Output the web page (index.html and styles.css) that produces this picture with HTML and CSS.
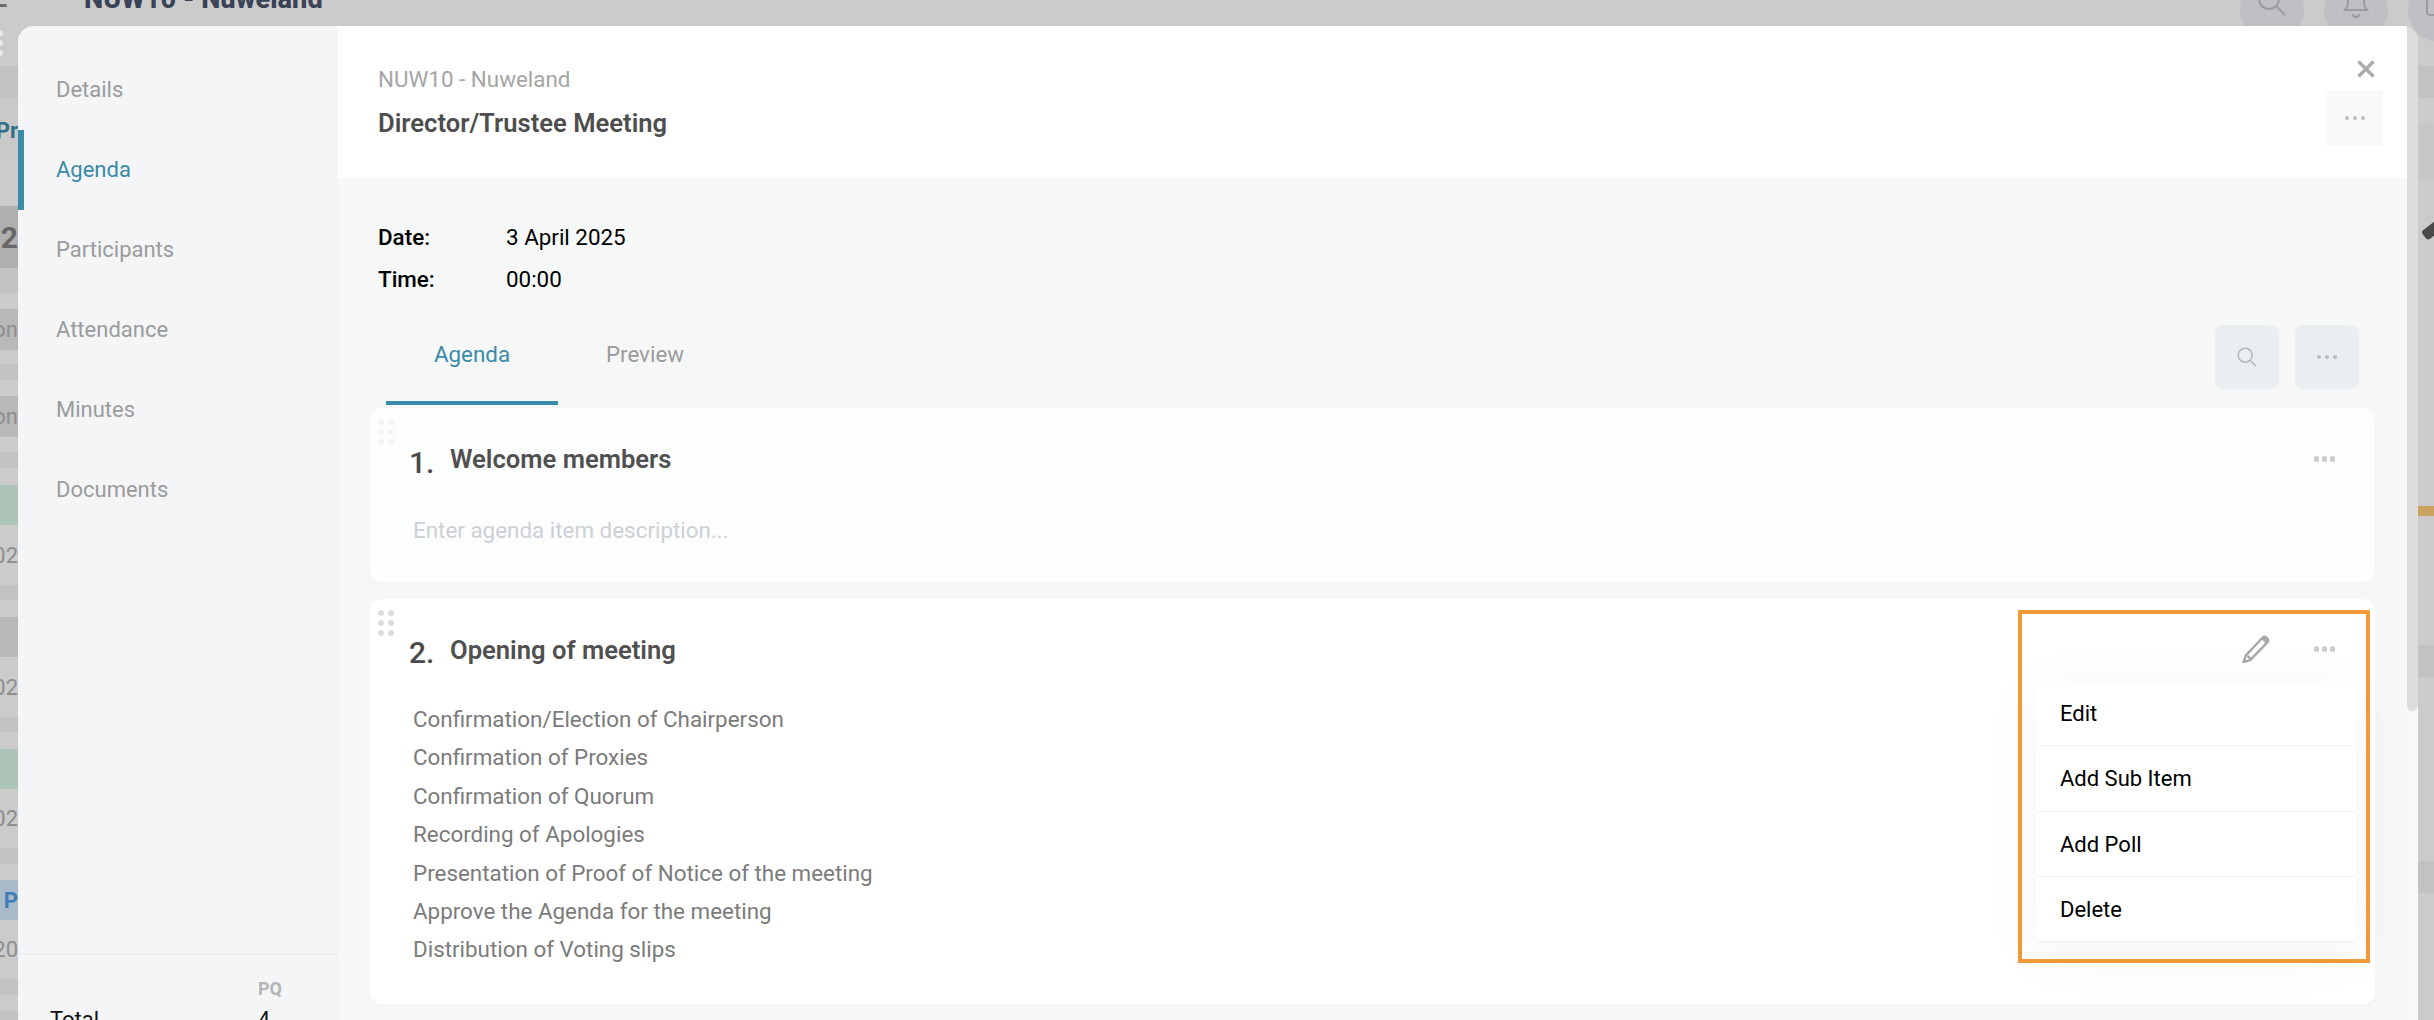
FILE: index.html
```html
<!DOCTYPE html>
<html lang="en">
<head>
<meta charset="utf-8">
<title>Director/Trustee Meeting</title>
<link rel="stylesheet" href="styles.css">
</head>
<body>
<div class="page">
  <div class="topbar">
    <div class="top-logo"></div>
    <div class="top-title">NUW10 - Nuweland</div>
    <div class="top-actions">
      <span class="round"><svg width="32" height="32" viewBox="0 0 32 32" fill="none" stroke="#9a9ba0" stroke-width="2"><circle cx="13" cy="13" r="10"/><path d="M20 20l9 9"/></svg></span>
      <span class="round"><svg width="32" height="32" viewBox="0 0 32 32" fill="none" stroke="#9a9ba0" stroke-width="2"><path d="M5 24c3-3 3-6 3-11a8 8 0 0 1 16 0c0 5 0 8 3 11z"/><path d="M13 28a3 3 0 0 0 6 0"/></svg></span>
      <span class="round"><svg width="32" height="32" viewBox="0 0 32 32" fill="none" stroke="#9a9ba0" stroke-width="2"><rect x="3" y="3" width="24" height="26" rx="3"/></svg></span>
    </div>
  </div>
  <div class="strip strip-left">
    <div class="band h66"></div>
    <div class="band h32 dark1"></div>
    <div class="band h64 txt teal">Pr</div>
    <div class="band h44 light"></div>
    <div class="band h62 dark3 num">2</div>
    <div class="band h25 dark1"></div>
    <div class="band h16 light"></div>
    <div class="band h41 dark2 txt">on</div>
    <div class="band h14 light"></div>
    <div class="band h16 dark1"></div>
    <div class="band h16 light"></div>
    <div class="band h41 dark2 txt">on</div>
    <div class="band h15 light"></div>
    <div class="band h16 dark1"></div>
    <div class="band h17 light"></div>
    <div class="band h40 green"></div>
    <div class="band h60 light txt">02</div>
    <div class="band h15 dark1"></div>
    <div class="band h17 light"></div>
    <div class="band h40 dark2"></div>
    <div class="band h60 light txt">02</div>
    <div class="band h15 dark1"></div>
    <div class="band h17 light"></div>
    <div class="band h40 green"></div>
    <div class="band h59 light txt">02</div>
    <div class="band h16 dark1"></div>
    <div class="band h16 light"></div>
    <div class="band h40 blue txt bluetext">P</div>
    <div class="band h59 light txt">20</div>
    <div class="band h16 dark1"></div>
    <div class="band h16 light"></div>
    <div class="band h16 dark1"></div>
  </div>
  <div class="strip strip-right">
    <div class="band h66"></div>
    <div class="band h32 dark1"></div>
    <div class="band h408 light"></div>
    <div class="band h10 orange"></div>
    <div class="band h129 light"></div>
    <div class="band h32 dark1"></div>
    <div class="band h184 light"></div>
    <div class="band h32 dark1"></div>
    <div class="band h127 light"></div>
    <span class="ghost-circle"></span>
    <span class="pen-bit"></span>
  </div>
  <div class="top-dots"><i></i><i></i><i></i></div>

  <div class="modal">
    <nav class="side">
      <ul class="side-list">
        <li class="side-item">Details</li>
        <li class="side-item active">Agenda</li>
        <li class="side-item">Participants</li>
        <li class="side-item">Attendance</li>
        <li class="side-item">Minutes</li>
        <li class="side-item">Documents</li>
      </ul>
      <div class="totals">
        <div class="pq">PQ</div>
        <div class="total-row"><span>Total</span><span class="total-val">4</span></div>
      </div>
    </nav>
    <div class="main">
      <header class="head">
        <div class="head-text">
          <div class="crumb">NUW10 - Nuweland</div>
          <div class="title">Director/Trustee Meeting</div>
        </div>
        <div class="head-actions">
          <svg class="close" width="18" height="18" viewBox="0 0 18 18" stroke="#ababab" stroke-width="3.4" fill="none"><path d="M1.5 1.5l15 15M16.5 1.5l-15 15"/></svg>
          <div class="head-more"><span class="dots small"><i></i><i></i><i></i></span></div>
        </div>
      </header>
      <section class="body">
        <dl class="meta">
          <dt>Date:</dt><dd>3 April 2025</dd>
          <dt>Time:</dt><dd>00:00</dd>
        </dl>
        <div class="tabbar">
          <div class="tabs">
            <div class="tab current">Agenda</div>
            <div class="tab">Preview</div>
          </div>
          <div class="tools">
            <div class="tool"><svg width="20" height="20" viewBox="0 0 20 20" fill="none" stroke="#b5b5b5" stroke-width="1.6"><circle cx="8.2" cy="8.2" r="7"/><path d="M13.2 13.2l5.8 6"/></svg></div>
            <div class="tool"><span class="dots small"><i></i><i></i><i></i></span></div>
          </div>
        </div>
        <article class="card card-faded">
          <span class="grip"><i></i><i></i><i></i><i></i><i></i><i></i></span>
          <div class="card-head">
            <span class="num-label">1.</span>
            <h2 class="card-title">Welcome members</h2>
            <span class="dots"><i></i><i></i><i></i></span>
          </div>
          <p class="placeholder">Enter agenda item description...</p>
        </article>
        <article class="card card-open">
          <span class="grip"><i></i><i></i><i></i><i></i><i></i><i></i></span>
          <div class="card-head">
            <span class="num-label">2.</span>
            <h2 class="card-title">Opening of meeting</h2>
            <svg class="pencil" width="28" height="28" viewBox="0 0 28 28"><path d="M20.5 2.8l-16.6 17.6-2.4 6.8 7-2.4 16.8-17.4c1.6-1.7.8-3.3-.3-4.3-1.1-1-2.9-1.9-4.5-.3zM5.6 20.9l2.6 2.4" fill="none" stroke="#a8a8a8" stroke-width="2.4" stroke-linejoin="round"/><path d="M19.4 4.2l4.6 4.4 1.3-1.4c1.5-1.6.7-3.1-.3-4.1-1-1-2.7-1.8-4.3-.3z" fill="#a8a8a8"/></svg>
            <span class="dots"><i></i><i></i><i></i></span>
          </div>
          <ul class="lines">
            <li>Confirmation/Election of Chairperson</li>
            <li>Confirmation of Proxies</li>
            <li>Confirmation of Quorum</li>
            <li>Recording of Apologies</li>
            <li>Presentation of Proof of Notice of the meeting</li>
            <li>Approve the Agenda for the meeting</li>
            <li>Distribution of Voting slips</li>
          </ul>
          <div class="menu">
            <div class="menu-item">Edit</div>
            <div class="menu-item">Add Sub Item</div>
            <div class="menu-item">Add Poll</div>
            <div class="menu-item">Delete</div>
          </div>
          <div class="highlight"></div>
        </article>
      </section>
    </div>
    <div class="scrollbar"><div class="thumb"></div></div>
  </div>
</div>
</body>
</html>
```
FILE: styles.css
```css
* { box-sizing: border-box; }
html, body { margin: 0; height: 100%; overflow: hidden; }
body { font-family: Roboto, "Liberation Sans", sans-serif; background: #cbcbcb; }
ul, dl, dd, p, h2 { margin: 0; padding: 0; }
ul { list-style: none; }
.page { position: relative; width: 2434px; height: 1020px; overflow: hidden; background: #cbcbcb; }

.topbar { height: 26px; position: relative; }
.top-logo { position: absolute; left: 0; top: 4px; width: 7px; height: 3px; background: #6a6a6a; border-radius: 0 2px 2px 0; }
.top-title { position: absolute; left: 84px; top: -19px; font-size: 27.2px; font-weight: 800; line-height: 36px; color: #3a4255; }
.top-actions { position: absolute; left: 2240px; top: -22px; display: flex; gap: 20px; }
.round { width: 64px; height: 64px; border-radius: 50%; background: #bfc0c4; display: flex; align-items: center; justify-content: center; padding-bottom: 16px; }

.strip { position: absolute; top: 0; width: 18px; height: 1020px; display: flex; flex-direction: column; overflow: hidden; }
.strip-left { left: 0; }
.strip-right { left: 2418px; width: 16px; }
.band { flex: none; display: flex; align-items: center; font-size: 22px; white-space: nowrap; }
.light { background: #cbcbcb; }
.dark1 { background: #c2c2c2; }
.dark2 { background: #b8b8b8; }
.dark3 { background: #afafaf; }
.green { background: #afc4b8; }
.blue { background: #a9bbcb; }
.orange { background: #c9a35f; }
.txt { color: #8d8d8d; justify-content: flex-end; }
.teal { color: #2f6f88; font-weight: 700; background: #c9c9c9; }
.bluetext { color: #3f7cb5; font-weight: 700; }
.num { color: #666; font-weight: 700; font-size: 30px; justify-content: flex-end; }
.h10 { height: 10px; } .h14 { height: 14px; } .h15 { height: 15px; } .h16 { height: 16px; } .h17 { height: 17px; }
.h25 { height: 25px; } .h32 { height: 32px; } .h40 { height: 40px; } .h41 { height: 41px; } .h44 { height: 44px; }
.h59 { height: 59px; } .h60 { height: 60px; } .h62 { height: 62px; } .h64 { height: 64px; } .h66 { height: 66px; }
.h127 { height: 127px; } .h129 { height: 129px; } .h184 { height: 184px; } .h408 { height: 408px; }
.ghost-circle { position: absolute; left: -20px; top: 123px; width: 56px; height: 57px; border-radius: 50%; background: #c6c6c6; }
.pen-bit { position: absolute; left: 4px; top: 224px; width: 22px; height: 11px; border-radius: 3px; background: #4a4a4a; transform: rotate(-38deg); }
.top-dots { position: absolute; left: -3px; top: 30px; display: flex; flex-direction: column; gap: 4px; }
.top-dots i { width: 6px; height: 6px; border-radius: 50%; background: #e8e8e8; }

.modal { position: absolute; left: 18px; top: 26px; width: 2400px; height: 1100px; display: flex; border-radius: 16px; overflow: hidden; background: #f6f8f7; }
.side { width: 320px; flex: none; background: #f3f5f7; display: flex; flex-direction: column; }
.side-list { padding-top: 24px; height: 927px; }
.side-item { height: 80px; line-height: 80px; padding-left: 38px; font-size: 22px; color: #9b9b9b; }
.side-item.active { color: #3a8ba8; box-shadow: inset 6px 0 0 #3a8ba8; }
.totals { border-top: 2px solid #eeeeef; padding: 22px 56px 0 32px; color: #111; }
.pq { font-size: 18px; font-weight: 700; color: #b5b5b5; text-align: right; line-height: 24px; }
.total-row { display: flex; justify-content: space-between; font-size: 22px; line-height: 26px; margin-top: 6px; padding-right: 12px; }

.main { flex: 1; min-width: 0; display: flex; flex-direction: column; }
.head { height: 152px; background: #fff; display: flex; justify-content: space-between; padding: 0 24px 0 40px; flex: none; }
.head-text { padding-top: 36px; }
.crumb { font-size: 22.4px; line-height: 34px; color: #a5a5a5; }
.title { font-size: 25.6px; font-weight: 600; line-height: 34px; color: #4e4e4e; margin-top: 10px; }
.head-actions { display: flex; flex-direction: column; align-items: flex-end; }
.close { margin: 34px 8px 0 0; }
.head-more { width: 56px; height: 56px; margin-top: 12px; background: #f9f9f9; display: flex; align-items: center; justify-content: center; }

.dots { display: inline-flex; gap: 2.5px; }
.dots i { width: 5.5px; height: 5.5px; border-radius: 50%; background: #cbcbcb; }
.dots.small { gap: 4px; }
.dots.small i { width: 4px; height: 4px; background: #bdbdbd; }

.body { flex: 1; padding: 42px 32px 0 32px; }
.meta { display: grid; grid-template-columns: 128px 1fr; row-gap: 8px; padding-left: 8px; font-size: 22.4px; line-height: 34px; color: #000; }
.meta dt { font-weight: 500; }
.tabbar { display: flex; justify-content: space-between; margin-top: 29px; padding-left: 16px; height: 83px; }
.tabs { display: flex; align-items: flex-start; }
.tab { width: 172px; height: 80px; padding-bottom: 18px; border-bottom: 4px solid transparent; display: flex; align-items: center; justify-content: center; font-size: 22.4px; color: #9b9b9b; }
.tab + .tab { padding-left: 2px; }
.tab.current { color: #3a8ba8; border-bottom-color: #3a8ba8; }
.tools { display: flex; gap: 16px; padding-right: 16px; }
.tool { width: 64px; height: 64px; border-radius: 8px; background: #ebeef1; display: flex; align-items: center; justify-content: center; }

.card { position: relative; background: #fff; border-radius: 12px; box-shadow: 0 2px 10px rgba(0,0,0,.015); padding: 0 40px 0 41px; }
.card-faded { height: 174px; background: #fcfdfd; }
.card-open { height: 405px; margin-top: 17px; }
.grip { position: absolute; left: 8px; top: 11px; display: grid; grid-template-columns: 6px 6px; gap: 4px; }
.grip i { width: 6px; height: 6px; border-radius: 50%; background: #dcdcdc; }
.card-faded .grip i { background: #f3f5f5; }
.card-head { display: flex; align-items: center; height: 36px; position: relative; }
.card-faded .card-head { top: 33px; }
.card-open .card-head { top: 32px; }
.num-label { font-size: 30px; font-weight: 500; color: #4a4a4a; width: 41px; margin-left: -2px; position: relative; top: 3px; }
.card-title { font-size: 25.6px; font-weight: 600; color: #505050; flex: 1; }
.card-open .card-title { top: 1px; position: relative; }
.pencil { margin-right: 44px; }
.placeholder { position: absolute; left: 43px; top: 105px; font-size: 22.4px; line-height: 34px; color: #ccd0d6; }
.lines { position: absolute; left: 43px; top: 101px; font-size: 22.4px; line-height: 38.4px; color: #7b7b7b; }
.menu { position: absolute; left: 1666px; top: 83px; width: 320px; height: 260px; background: #fff; border-radius: 12px; box-shadow: 0 10px 60px rgba(0,0,0,.05); display: flex; flex-direction: column; }
.menu-item { height: 65px; display: flex; align-items: center; padding-left: 24px; font-size: 22px; color: #000; border-bottom: 1px solid #f2f2f2; }
.menu-item:first-child { height: 64px; }
.menu-item:nth-child(2) { height: 66px; }
.highlight { position: absolute; left: 1648px; top: 11px; width: 352px; height: 353px; border: 4px solid #f29a38; pointer-events: none; }

.scrollbar { width: 11px; flex: none; background: #f7f9f8; }
.thumb { height: 685px; background: #dcdedd; border-radius: 0 0 6px 6px; }
```
